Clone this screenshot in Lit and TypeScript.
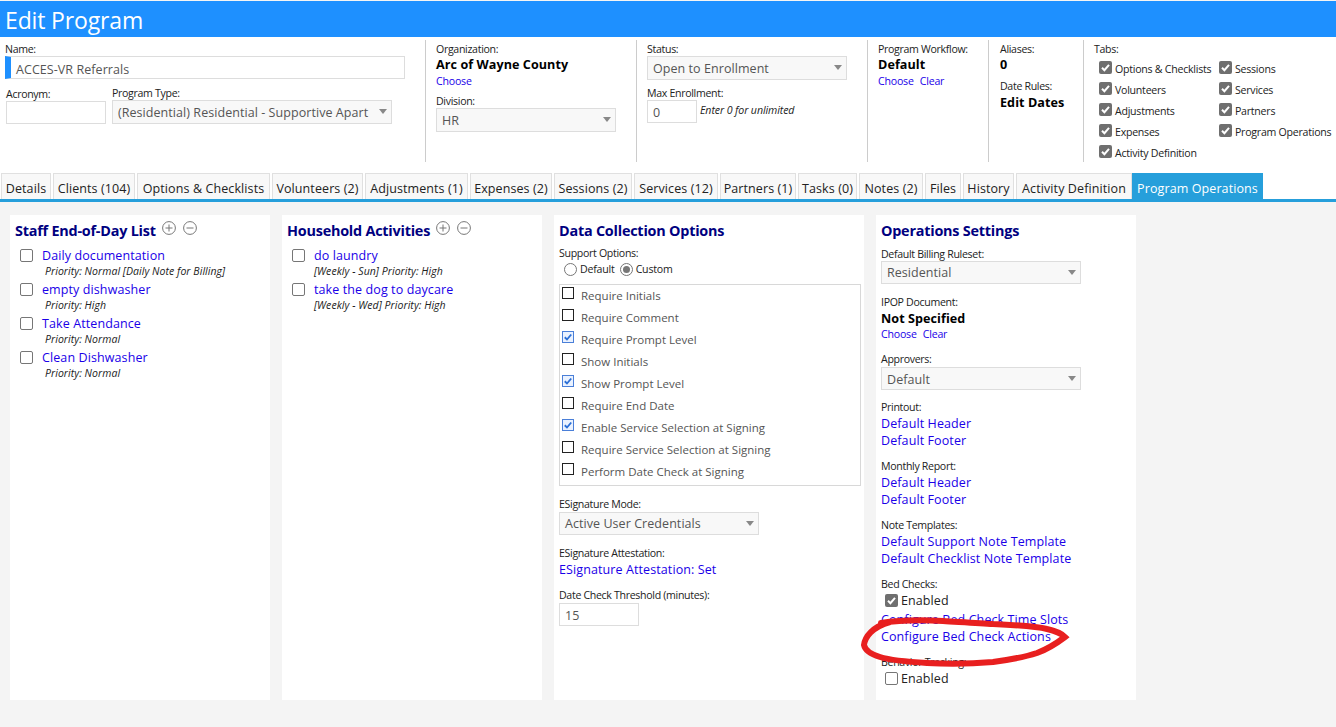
import { LitElement, html, css, svg } from "lit";
import { customElement } from "lit/decorators.js";

const TABS: [string, number][] = [
  ["Details", 50], ["Clients (104)", 82], ["Options & Checklists", 133], ["Volunteers (2)", 91],
  ["Adjustments (1)", 103], ["Expenses (2)", 82], ["Sessions (2)", 78], ["Services (12)", 84],
  ["Partners (1)", 76], ["Tasks (0)", 59], ["Notes (2)", 64], ["Files", 36], ["History", 51], ["Activity Definition", 116],
];

const check = svg`<svg viewBox="0 0 13 13" width="13" height="13"><path d="M3 6.8 5.4 9.2 10 3.8" fill="none" stroke="currentColor" stroke-width="2"/></svg>`;

@customElement("app-root")
export class AppRoot extends LitElement {
  static styles = css`
    :host { display: block; position: relative; width: 1336px; height: 727px; overflow: hidden; background: #f4f4f4;
      font-family: "Open Sans", "Noto Sans", sans-serif; color: #222; }
    a { color: #1a00e8; text-decoration: none; }
    .title { margin-top: 1px; height: 36px; background: #1e90ff; color: #fff; font-size: 23px; line-height: 39px; padding-left: 5px; letter-spacing: -0.15px; }
    .head { display: flex; height: 136px; background: #fff; box-sizing: border-box; padding: 3px 0 11px; }
    .sec { box-sizing: border-box; border-right: 1px solid #ccc; padding: 1px 0 0 10px; }
    .sec:last-child { border-right: 0; }
    .s1 { width: 426px; padding-left: 5px; } .s2 { width: 211px; } .s3 { width: 231px; } .s4 { width: 121px; }
    .s5 { width: 95px; padding-left: 11px; } .s6 { flex: 1; }
    .lab { font-size: 10.6px; line-height: 15px; height: 15px; letter-spacing: -0.32px; color: #222; white-space: nowrap; }
    .head .lab, .lab.low { line-height: 17px; }
    .m1 { margin-top: 1px; } .m3 { margin-top: 3px; } .m5 { margin-top: 5px; } .m10 { margin-top: 10px; } .m11 { margin-top: 11px; }
    .val { font-size: 12.6px; line-height: 17px; font-weight: 700; color: #000; letter-spacing: 0.06px; }
    .val.m1 { margin-top: 1px; }
    .lnk { font-size: 10.6px; line-height: 15px; letter-spacing: -0.2px; display: flex; gap: 6px; }
    .head .lnk { line-height: 17px; }
    .big { font-size: 12.5px; line-height: 17px; letter-spacing: 0.1px; display: block; white-space: nowrap; }
    .sel, .inp { box-sizing: border-box; height: 24px; border: 1px solid #ddd; font-size: 12.5px; line-height: 23px; padding-left: 5px; letter-spacing: 0.06px; color: #555; white-space: nowrap; overflow: hidden; }
    .sel { position: relative; background: #f8f8f8; padding-right: 20px; }
    .sel::after { content: ""; position: absolute; right: 4px; top: 8px; border: 4px solid transparent; border-top: 5px solid #888; border-bottom: 0; }
    .panel .sel { height: 23px; line-height: 22px; }
    .panel .sel.low { line-height: 24px; }
    .inp { background: #fff; }
    .name { width: 400px; height: 23px; border-left: 6px solid #1e90ff; line-height: 25px; }
    .row { display: flex; gap: 6px; margin-top: 6px; margin-left: 1px; }
    .w100 { width: 100px; height: 23px; } .w280 { width: 280px; } .w180 { width: 180px; } .w200 { width: 200px; }
    .w50 { width: 50px; height: 23px; } .w80 { width: 80px; height: 23px; }
    .enroll { display: flex; }
    .hint { font-size: 10.6px; font-style: italic; letter-spacing: -0.1px; margin-left: 3px; line-height: 20px; color: #222; white-space: nowrap; }
    .tabcols { display: grid; grid-template-columns: 120px auto; grid-auto-flow: column; grid-template-rows: repeat(5, 21px); margin: 2px 0 0 5px; }
    .graycb { display: flex; align-items: center; gap: 3px; font-size: 10.6px; letter-spacing: -0.25px; white-space: nowrap; color: #222; }
    .gbox { width: 13px; height: 13px; border-radius: 2px; background: #6f6f6f; color: #fff; flex: none; margin-top: -3px; }
    .gbox svg { display: block; }
    .tabs { display: flex; height: 26px; background: #fff; padding-left: 1px; }
    .tab { box-sizing: border-box; flex: none; margin-right: 2px; background: #f8f8f8; border: 1px solid #e0e0e0; border-bottom: 0; text-align: center; font-size: 12.5px; line-height: 29px; letter-spacing: 0.1px; color: #222; white-space: nowrap; overflow: hidden; }
    .tab.last { margin-right: 0; }
    .tab.on { width: 131px; background: #269fdb; border-color: #269fdb; color: #fff; margin-right: 0; }
    .rule { height: 3px; background: #269fdb; }
    .cols { display: flex; gap: 12px; padding: 13px 0 0 10px; }
    .panel { box-sizing: border-box; height: 485px; background: #fff; padding: 5px 5px 0; }
    .p260 { width: 260px; } .p310 { width: 310px; }
    h2 { margin: 0; font-size: 14.4px; line-height: 21px; font-weight: 700; color: #000080; letter-spacing: -0.22px; display: flex; align-items: flex-start; gap: 6px; white-space: nowrap; }
    h2 svg { display: block; margin-top: 1px; }
    .icons { display: flex; gap: 7px; }
    .list { margin-top: 5px; }
    .item { display: grid; grid-template-columns: 22px auto; height: 34px; padding-left: 5px; }
    .ebox { width: 13px; height: 13px; box-sizing: border-box; border: 1px solid #767676; border-radius: 2px; background: #fff; margin-top: 3px; }
    .item a { font-size: 12.5px; line-height: 19px; height: 16px; letter-spacing: 0.1px; white-space: nowrap; }
    .sub { grid-column: 2; font-size: 10.5px; font-style: italic; line-height: 14px; letter-spacing: 0.05px; color: #222; white-space: nowrap; }
    .sub.in { margin-left: 3px; }
    .radios { display: flex; align-items: center; gap: 3px; font-size: 10.6px; letter-spacing: -0.2px; line-height: 16px; margin-left: 5px; }
    .rd { width: 13px; height: 13px; box-sizing: border-box; border: 1px solid #767676; border-radius: 50%; background: #fff; position: relative; }
    .rd.on { margin-left: 2px; }
    .rd.on::after { content: ""; position: absolute; inset: 2px; border-radius: 50%; background: #777; }
    .box { box-sizing: border-box; margin-top: 7px; width: 302px; height: 202px; border: 1px solid #d8d8d8; }
    .opt { display: flex; height: 22px; align-items: flex-start; font-size: 11.5px; line-height: 22px; letter-spacing: 0; color: #555; padding-left: 2px; white-space: nowrap; }
    .cb { box-sizing: border-box; width: 12px; height: 12px; border: 1px solid #222; margin: 2px 7px 0 0; flex: none; background: #fff; }
    .cb.on { border-color: #4a7fd8; background: #eaf2ff; color: #2b6fd6; }
    .cb svg { display: block; margin: -1px; width: 12px; height: 12px; }
    .cbrow { display: flex; align-items: center; gap: 3px; font-size: 12.5px; line-height: 19px; margin: -1px 0 0 4px; letter-spacing: 0.1px; }
    .cbrow.first { margin-bottom: 1px; }
    .cbrow .gbox, .cbrow .ebox { margin-top: 0; }
    .ann { position: absolute; left: 0; top: 0; pointer-events: none; }
  `;

  private opt(t: string, on = false) {
    return html`<div class="opt"><span class="cb ${on ? "on" : ""}">${on ? check : ""}</span>${t}</div>`;
  }
  private gc(t: string) {
    return html`<div class="graycb"><span class="gbox">${check}</span>${t}</div>`;
  }
  private item(a: string, s: string, inset = true) {
    return html`<div class="item"><span class="ebox"></span><a>${a}</a><span class="sub ${inset ? "in" : ""}">${s}</span></div>`;
  }
  private icons() {
    return html`<span class="icons">
      <svg width="14" height="14" viewBox="0 0 14 14" fill="none" stroke="#777"><circle cx="7" cy="7" r="6.4"/><path d="M7 3.5v7M3.5 7h7"/></svg>
      <svg width="14" height="14" viewBox="0 0 14 14" fill="none" stroke="#777"><circle cx="7" cy="7" r="6.4"/><path d="M3.5 7h7"/></svg>
    </span>`;
  }

  render() {
    return html`
      <div class="title">Edit Program</div>
      <div class="head">
        <div class="sec s1">
          <div class="lab">Name:</div>
          <div class="inp name">ACCES-VR Referrals</div>
          <div class="row">
            <div><div class="lab m1">Acronym:</div><div class="inp w100"></div></div>
            <div><div class="lab">Program Type:</div><div class="sel w280">(Residential) Residential - Supportive Apart</div></div>
          </div>
        </div>
        <div class="sec s2">
          <div class="lab">Organization:</div>
          <div class="val">Arc of Wayne County</div>
          <div class="lnk"><a>Choose</a></div>
          <div class="lab m3">Division:</div>
          <div class="sel w180">HR</div>
        </div>
        <div class="sec s3">
          <div class="lab">Status:</div>
          <div class="sel w200">Open to Enrollment</div>
          <div class="lab m5">Max Enrollment:</div>
          <div class="enroll"><div class="inp w50">0</div><span class="hint">Enter 0 for unlimited</span></div>
        </div>
        <div class="sec s4">
          <div class="lab">Program Workflow:</div>
          <div class="val">Default</div>
          <div class="lnk"><a>Choose</a><a>Clear</a></div>
        </div>
        <div class="sec s5">
          <div class="lab">Aliases:</div>
          <div class="val">0</div>
          <div class="lab m5">Date Rules:</div>
          <div class="val m1">Edit Dates</div>
        </div>
        <div class="sec s6">
          <div class="lab">Tabs:</div>
          <div class="tabcols">
            ${["Options & Checklists", "Volunteers", "Adjustments", "Expenses", "Activity Definition"].map((t) => this.gc(t))}
            ${["Sessions", "Services", "Partners", "Program Operations"].map((t) => this.gc(t))}
          </div>
        </div>
      </div>
      <div class="tabs">
        ${TABS.map(([t, w], i) => html`<div class="tab ${i === TABS.length - 1 ? "last" : ""}" style="width:${w}px">${t}</div>`)}
        <div class="tab on">Program Operations</div>
      </div>
      <div class="rule"></div>
      <div class="cols">
        <div class="panel p260">
          <h2>Staff End-of-Day List ${this.icons()}</h2>
          <div class="list">
            ${this.item("Daily documentation", "Priority: Normal [Daily Note for Billing]")}
            ${this.item("empty dishwasher", "Priority: High")}
            ${this.item("Take Attendance", "Priority: Normal")}
            ${this.item("Clean Dishwasher", "Priority: Normal")}
          </div>
        </div>
        <div class="panel p260">
          <h2>Household Activities ${this.icons()}</h2>
          <div class="list">
            ${this.item("do laundry", "[Weekly - Sun] Priority: High", false)}
            ${this.item("take the dog to daycare", "[Weekly - Wed] Priority: High", false)}
          </div>
        </div>
        <div class="panel p310">
          <h2>Data Collection Options</h2>
          <div class="lab m5">Support Options:</div>
          <div class="radios"><span class="rd"></span>Default <span class="rd on"></span>Custom</div>
          <div class="box">
            ${this.opt("Require Initials")}
            ${this.opt("Require Comment")}
            ${this.opt("Require Prompt Level", true)}
            ${this.opt("Show Initials")}
            ${this.opt("Show Prompt Level", true)}
            ${this.opt("Require End Date")}
            ${this.opt("Enable Service Selection at Signing", true)}
            ${this.opt("Require Service Selection at Signing")}
            ${this.opt("Perform Date Check at Signing")}
          </div>
          <div class="lab m11">ESignature Mode:</div>
          <div class="sel w200">Active User Credentials</div>
          <div class="lab m11">ESignature Attestation:</div>
          <a class="big">ESignature Attestation: Set</a>
          <div class="lab m10">Date Check Threshold (minutes):</div>
          <div class="inp w80">15</div>
        </div>
        <div class="panel p260">
          <h2>Operations Settings</h2>
          <div class="lab low m5">Default Billing Ruleset:</div>
          <div class="sel w200">Residential</div>
          <div class="lab m11">IPOP Document:</div>
          <div class="val">Not Specified</div>
          <div class="lnk"><a>Choose</a><a>Clear</a></div>
          <div class="lab m10">Approvers:</div>
          <div class="sel w200 low">Default</div>
          <div class="lab m10">Printout:</div>
          <a class="big">Default Header</a><a class="big">Default Footer</a>
          <div class="lab m10">Monthly Report:</div>
          <a class="big">Default Header</a><a class="big">Default Footer</a>
          <div class="lab m10">Note Templates:</div>
          <a class="big">Default Support Note Template</a><a class="big">Default Checklist Note Template</a>
          <div class="lab m10">Bed Checks:</div>
          <div class="cbrow first"><span class="gbox">${check}</span>Enabled</div>
          <a class="big">Configure Bed Check Time Slots</a><a class="big">Configure Bed Check Actions</a>
          <div class="lab m10">Behavior Tracking:</div>
          <div class="cbrow"><span class="ebox"></span>Enabled</div>
        </div>
      </div>
      <svg class="ann" width="1336" height="727" viewBox="0 0 1336 727" fill="none">
        <path d="M881 623C900 620 925 620 943 621C960 622 980 623 993 624C1015 625 1035 626 1047 629C1056 631 1062 634 1065 637C1057 643 1048 649 1037 653C1022 658 1008 660 993 662C970 664 945 664 927 663C910 662 893 661 880 657C870 654 865 650 864 645C865 637 872 627 890 622" stroke="#e81f1f" stroke-width="6" stroke-linecap="round"/>
      </svg>
    `;
  }
}
